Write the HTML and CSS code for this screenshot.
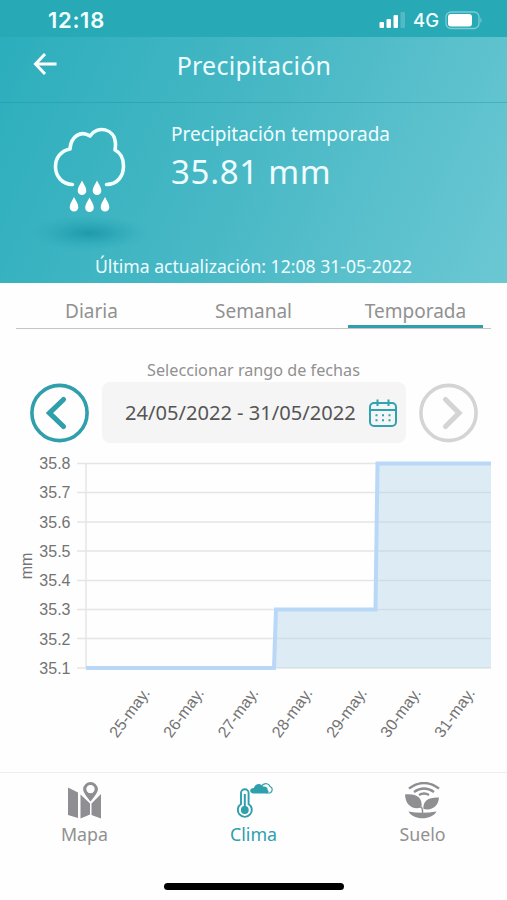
FILE: index.html
```html
<!DOCTYPE html>
<html lang="es">
  <head>
    <meta charset="UTF-8" />
    <meta name="viewport" content="width=device-width, initial-scale=1.0" />
    <title>Precipitación</title>
    <link rel="stylesheet" href="styles.css">
  </head>
  <body>
    <div class="status">
      <span class="time">12:18</span>
      <div class="status-icons">
        <svg width="28" height="18" viewBox="0 0 28 18">
          <rect x="0.500" y="11" width="4.5" height="6" rx="1" fill="#fff" />
          <rect x="7.500" y="8" width="4.5" height="9" rx="1" fill="#fff" />
          <rect x="14.500" y="4" width="4.5" height="13" rx="1" fill="#fff" />
          <rect x="21.500" y="1" width="4.5" height="16" rx="1" fill="#fff" opacity="0.2" />
        </svg>
        <span class="network">4G</span>
        <svg width="38" height="19" viewBox="0 0 38 19">
          <rect x="1" y="1" width="33" height="16.5" rx="5" fill="none" stroke="#fff" stroke-opacity="0.4" stroke-width="1.3" />
          <rect x="3" y="3" width="24" height="12.5" rx="3" fill="#fff" />
          <path d="M35.5 6.5q2 2.700 0 5.500z" fill="#fff" opacity="0.5" />
        </svg>
      </div>
    </div>

    <header>
      <div class="nav">
        <svg width="26" height="24" viewBox="0 0 26 24">
          <path d="M13 2L3.500 12l9.500 10M3.500 12h21" fill="none" stroke="#fff" stroke-width="3" />
        </svg>
        <h1>Precipitación</h1>
      </div>
      <div class="summary">
        <svg width="120" height="130" viewBox="0 0 120 130">
          <defs>
            <radialGradient id="shadow">
              <stop offset="0" stop-color="#1795a8" stop-opacity="0.85" />
              <stop offset="0.5" stop-color="#1c9bad" stop-opacity="0.4" />
              <stop offset="1" stop-color="#2aa5b5" stop-opacity="0" />
            </radialGradient>
            <path id="drop" d="M0-7.500C1.500-4 4.300-1 4.300 2.700a4.300 4.300 0 0 1-8.600 0C-4.300-1-1.500-4 0-7.500z" />
          </defs>
          <ellipse cx="60" cy="112" rx="60" ry="18" fill="url(#shadow)" />
          <path d="M43.500 63.500C33 63.500 26.500 55 26.500 45.500c0-9 6-16 14.500-17.500C42 15 52 9 61 15C68 4 86 7 86.500 23c0 2 0 4-.5 6c6 3 8.500 9 8.500 16c0 10-6 18.500-17 18.500" fill="none" stroke="#f2ffff" stroke-width="3.600" stroke-linecap="round" stroke-linejoin="round" />
          <g fill="#fff">
            <use href="#drop" x="53" y="67" />
            <use href="#drop" x="68" y="67" />
            <use href="#drop" x="45" y="83.500" />
            <use href="#drop" x="60.500" y="84" />
            <use href="#drop" x="76" y="83.500" />
          </g>
        </svg>
        <div class="total">
          <p class="total-label">Precipitación temporada</p>
          <p class="total-value">35.81 mm</p>
        </div>
      </div>
      <p class="updated">Última actualización: 12:08 31-05-2022</p>
    </header>

    <div class="tabs">
      <span class="tab">Diaria</span>
      <span class="tab">Semanal</span>
      <span class="tab active">Temporada</span>
    </div>

    <p class="range-label">Seleccionar rango de fechas</p>
    <div class="range">
      <svg class="arrow" width="60" height="60" viewBox="0 0 60 60">
        <circle cx="30.500" cy="30" r="27.600" />
        <path class="chevron" d="M34.500 16.500L20.500 30l14 13.500" />
      </svg>
      <div class="dates">
        <span>24/05/2022 - 31/05/2022</span>
        <svg width="30" height="30" viewBox="0 0 30 30" fill="none" stroke="#2fa3b0" stroke-width="2">
          <rect x="2" y="5" width="26" height="23" rx="4" />
          <path d="M2 12h26M9.500 1.500v6.500M20.500 1.500v6.500" />
          <path d="M7.500 17.300h16M7.500 22.300h16" stroke-dasharray="2 4.500" />
        </svg>
      </div>
      <svg class="arrow disabled" width="60" height="60" viewBox="0 0 60 60">
        <circle cx="29.500" cy="30" r="27.600" />
        <path class="chevron" d="M26.500 16.500L40 30l-13.500 13.500" />
      </svg>
    </div>

    <svg class="chart" width="507" height="320" viewBox="0 0 507 320">
      <path class="grid" d="M77 13.500h414M77 42.500h414M77 72h414M77 101h414M77 130.500h414M77 159.500h414M77 188.500h414M77 218h414M86 13v205" />
      <path class="area" d="M86 218H274L276 159.500H375.500L377.500 13.500H491V218z" />
      <path class="line" d="M86 218H274L276 159.500H375.500L377.500 13.500H491" />
      <g class="y-labels">
        <text x="70.500" y="19">35.8</text>
        <text x="70.500" y="48">35.7</text>
        <text x="70.500" y="77.500">35.6</text>
        <text x="70.500" y="106.500">35.5</text>
        <text x="70.500" y="136">35.4</text>
        <text x="70.500" y="165">35.3</text>
        <text x="70.500" y="194.500">35.2</text>
        <text x="70.500" y="223.500">35.1</text>
      </g>
      <text class="unit" transform="translate(31.500 116) rotate(-90)">mm</text>
      <g class="x-labels">
        <text transform="translate(150.500 243) rotate(-54)">25-may.</text>
        <text transform="translate(204.500 243) rotate(-54)">26-may.</text>
        <text transform="translate(259 243) rotate(-54)">27-may.</text>
        <text transform="translate(313 243) rotate(-54)">28-may.</text>
        <text transform="translate(367.500 243) rotate(-54)">29-may.</text>
        <text transform="translate(421.500 243) rotate(-54)">30-may.</text>
        <text transform="translate(475.500 243) rotate(-54)">31-may.</text>
      </g>
    </svg>

    <nav class="bottom">
      <div class="item">
        <svg width="38" height="40" viewBox="0 0 38 40" fill="#8e8e93">
          <path d="M2 5.500l10 5V36L2 33zM14.500 12.500l9.500 9V32.500L14.500 36.500zM25.500 21.500l9.500-9.500V36.500L25.500 33z" />
          <path fill-rule="evenodd" stroke="#fff" stroke-width="1.200" d="M24.500 20.500C20 15 16.500 11 16.500 7.500a8 8 0 0 1 16 0C32.500 11 29 15 24.500 20.500zM24.500 3.500a3.600 3.600 0 1 0 0 7.200a3.600 3.600 0 1 0 0-7.200z" />
        </svg>
        <span>Mapa</span>
      </div>
      <div class="item current">
        <svg width="38" height="40" viewBox="0 0 38 40" fill="none" stroke="#2f9fac">
          <path d="M6 22V11a3.800 3.800 0 0 1 7.600 0V22a7 7 0 1 1-7.600 0z" stroke-width="1.900" />
          <path d="M9.800 12v14" stroke-width="2" />
          <circle cx="9.800" cy="28" r="3.900" fill="#2f9fac" stroke="none" />
          <path d="M27 3.500c3-3 7-2 8 1c3 1 3 5 0 6.500H31" stroke-width="1.200" />
          <path d="M18.500 11.500c-4.500-.5-4.500-5.500.500-5.500C20 1 26.500 1 28 4.500c4-.5 5 2 4.500 3.500c2 1 1 3.500-1.500 3.500z" fill="#2f9fac" stroke="none" />
        </svg>
        <span>Clima</span>
      </div>
      <div class="item">
        <svg width="38" height="40" viewBox="0 0 38 40" fill="#8e8e93">
          <path d="M5 6.500Q20-4.500 35 6.500M10 10q10-7 20 0M15 13q5-3 10 0" fill="none" stroke="#8e8e93" stroke-width="2.400" />
          <path d="M1 12.500C12 11.500 19 15 17.500 25.500C8 28 1.500 23 1 12.500zM35 15.500C25 15 18.500 18.500 19.500 27C28 29 34.500 24 35 15.500z" />
          <path d="M17.500 25q1.500 3 1 6" fill="none" stroke="#8e8e93" stroke-width="1.500" />
          <path d="M4.500 29.500q13 2.500 28 0C28 38.500 9 38.500 4.500 29.500z" />
        </svg>
        <span>Suelo</span>
      </div>
    </nav>
    <div class="home-bar"></div>
  </body>
</html>
```
FILE: styles.css
```css
* {
  box-sizing: border-box;
}

body {
  margin: 0;
  width: 507px;
  height: 900px;
  display: flex;
  flex-direction: column;
  background: #fefefe;
  color: #919191;
  font-family: "Noto Sans", sans-serif;
  overflow: hidden;
}

p,
h1 {
  margin: 0;
  font-weight: 400;
}

svg {
  display: block;
  flex-shrink: 0;
}

.status {
  display: flex;
  justify-content: space-between;
  height: 37px;
  padding: 0 24px 0 48px;
  background: #27a9b6;
  color: #f2ffff;
}

.time {
  font: 600 22px/41px Inter, sans-serif;
  letter-spacing: 0.7px;
}

.status-icons {
  display: flex;
  align-items: center;
  gap: 6px;
  padding-top: 3px;
}

.network {
  font: 500 18.5px/30px Inter, sans-serif;
}

header {
  height: 246px;
  background: linear-gradient(115deg, #2caebc 0%, #48b8c5 48%, #6bc8d3 100%);
  color: #effdff;
}

.nav {
  display: flex;
  align-items: center;
  height: 66px;
  padding: 0 32px 11px;
  border-bottom: 1px solid rgba(30, 145, 160, 0.4);
}

h1 {
  flex: 1;
  padding: 2px 25px 0 0;
  text-align: center;
  font-size: 25px;
  line-height: 36px;
  letter-spacing: 0.25px;
}

.summary {
  display: flex;
  height: 149px;
  padding: 18px 28px 0 29px;
}

.total {
  padding-left: 22px;
}

.total-label {
  font-size: 19px;
  line-height: 26px;
}

.total-value {
  font-size: 33px;
  line-height: 50px;
  letter-spacing: 0.7px;
}

.updated {
  text-align: center;
  font-size: 17.6px;
  line-height: 28px;
}

.tabs {
  display: flex;
  justify-content: center;
  gap: 27px;
  height: 46px;
  margin: 0 16px;
  border-bottom: 1px solid #c5c5c5;
}

.tab {
  width: 135px;
  padding-top: 14px;
  text-align: center;
  font-size: 19px;
  line-height: 28px;
}

.active {
  border-bottom: 3px solid #2f9fac;
}

.range-label {
  padding-top: 29px;
  text-align: center;
  font-size: 16.2px;
  line-height: 24px;
}

.range {
  display: flex;
  justify-content: space-between;
  align-items: center;
  height: 61px;
  margin: 0 28px 0 29px;
}

.arrow {
  fill: none;
  stroke: #2f9fac;
  stroke-width: 3.6;
}

.chevron {
  stroke-width: 5.2;
  stroke-linecap: round;
}

.disabled {
  stroke: #d4d4d4;
}

.dates {
  display: flex;
  align-items: center;
  justify-content: space-between;
  width: 304px;
  height: 61px;
  padding: 0 8px 0 23px;
  border-radius: 8px;
  background: #f5f5f5;
  color: #555;
  font-size: 20.1px;
}

.chart {
  margin-top: 7px;
  font: 16px "Liberation Sans", sans-serif;
  fill: #737373;
}

.grid {
  stroke: #e5e5e5;
  stroke-width: 1.5;
  fill: none;
}

.area {
  fill: #add2e6;
  fill-opacity: 0.42;
}

.line {
  fill: none;
  stroke: #b9d8f8;
  stroke-width: 4;
}

.y-labels,
.x-labels {
  text-anchor: end;
}

.unit {
  text-anchor: middle;
}

.bottom {
  display: flex;
  height: 100px;
  margin-top: 2px;
  border-top: 1px solid #eee;
}

.item {
  flex: 1;
  display: flex;
  flex-direction: column;
  align-items: center;
  padding-top: 9px;
  font-size: 17.8px;
  line-height: 25px;
}

.current {
  color: #2f9fac;
}

.home-bar {
  width: 180px;
  height: 7px;
  margin: 11px auto 0;
  border-radius: 4px;
  background: #000;
}
```
